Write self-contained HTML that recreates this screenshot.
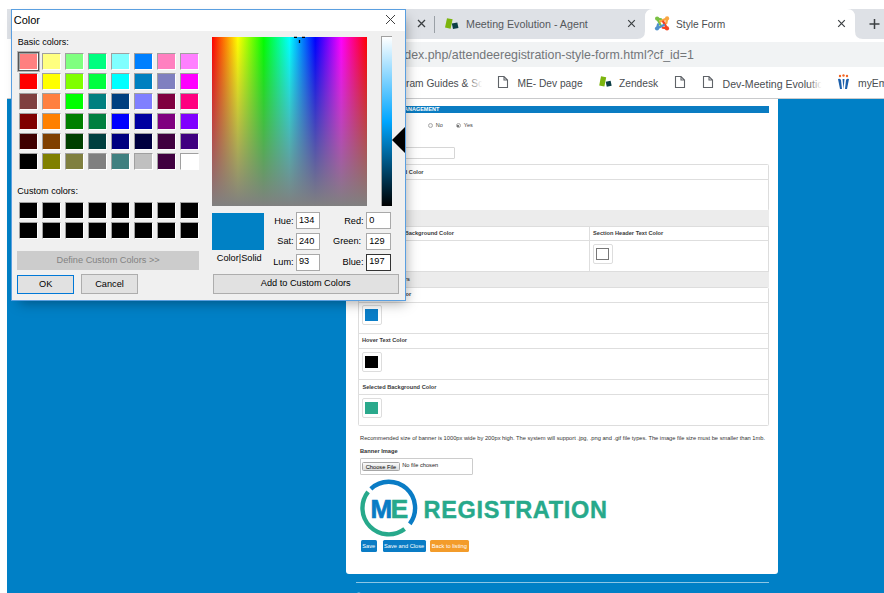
<!DOCTYPE html>
<html><head><meta charset="utf-8">
<style>
*{margin:0;padding:0;box-sizing:border-box}
html,body{width:884px;height:593px;overflow:hidden;background:#fff;font-family:"Liberation Sans",sans-serif}
.a{position:absolute}
.t{position:absolute;white-space:nowrap;line-height:1}
/* browser */
#tabs{left:7px;top:9px;width:877px;height:30px;background:#dee1e6}
#toolbar{left:7px;top:39px;width:877px;height:60px;background:#fff}
#addr{left:60px;top:42px;width:840px;height:25px;background:#f1f3f4;border-radius:13px}
#bmline{left:7px;top:98px;width:877px;height:1px;background:#c9cacc}
#page{left:7px;top:99px;width:877px;height:494px;background:#0080c6}
#panel{left:346px;top:99px;width:432px;height:475px;background:#fff;border-radius:0 0 3px 3px}
.ln{position:absolute;background:#dedede}
.band{position:absolute;background:#ececec}
.hd{position:absolute;font-size:5.65px;font-weight:700;color:#3a3a3a;white-space:nowrap;line-height:1}
.sw{position:absolute;width:20px;height:20px;border:1px solid #ddd;border-radius:2px;background:#fff}
.sw i{position:absolute;left:2px;top:3px;width:13px;height:11.5px;display:block}
.btn{position:absolute;height:11.3px;border-radius:1.5px;color:#fff;font-size:5.7px;line-height:13px;text-align:center;white-space:nowrap}
/* dialog */
#dlg{left:11px;top:9px;width:395px;height:292px;background:#f0f0f0;border:1px solid #5a9fe0;box-shadow:4px 6px 12px -4px rgba(0,0,0,.35)}
#title{left:0;top:0;width:393px;height:21px;background:#fff}
.lbl{position:absolute;font-size:9.2px;color:#000;white-space:nowrap;line-height:1}
.c{position:absolute;width:19px;height:17px;border-top:1px solid #a0a0a0;border-left:1px solid #a0a0a0;border-right:1px solid #fff;border-bottom:1px solid #fff}
.inp{position:absolute;width:24.4px;height:17.2px;background:#fff;border:1px solid #a9a9a9;font-size:9.2px;line-height:1;padding:2.5px 0 0 2px;color:#000}
.wbtn{position:absolute;height:19.5px;background:#e1e1e1;border:1px solid #adadad;font-size:9.2px;line-height:17.5px;text-align:center;color:#000}
</style></head><body>
<!-- BROWSER CHROME -->
<div id="tabs" class="a"></div>
<div class="a" style="left:434px;top:15.5px;width:1px;height:17px;background:#9aa0a6"></div>
<!-- close X of tab left of divider -->
<svg class="a" style="left:417px;top:19px" width="9" height="9" viewBox="0 0 9 9"><path d="M1 1L8 8M8 1L1 8" stroke="#3c4043" stroke-width="1.3"/></svg>
<!-- inactive tab favicon -->
<svg class="a" style="left:444px;top:17px" width="16" height="13" viewBox="0 0 16 13"><path d="M3 1.2L8.6 2.3L6.6 11.8L1 10.6Z" fill="#7cb50e"/><rect x="8.4" y="6" width="5.6" height="5.6" fill="#0d3f47" transform="rotate(-12 11 9)"/></svg>
<div class="t" style="left:466px;top:19.1px;font-size:10.7px;color:#55585c">Meeting Evolution - Agent</div>
<svg class="a" style="left:626.8px;top:19.2px" width="9" height="9" viewBox="0 0 9 9"><path d="M1.2 1.2L7.8 7.8M7.8 1.2L1.2 7.8" stroke="#3c4043" stroke-width="1.2"/></svg>
<!-- active tab -->
<svg class="a" style="left:637px;top:9px" width="233" height="30" viewBox="0 0 233 30"><path d="M0 30Q8 30 8 22V8Q8 0 16 0H210Q218 0 218 8V22Q218 30 226 30Z" fill="#fff"/></svg>
<!-- joomla icon -->
<svg class="a" style="left:654px;top:16px" width="16" height="15" viewBox="0 0 16 15">
<g stroke-width="2.3" stroke-linecap="round" stroke-linejoin="round" fill="none">
<path d="M7.2 3.4L3.2 2.5L6.6 9.2" stroke="#7ac143"/>
<path d="M12.3 7L13.2 2.3L6.4 5.4" stroke="#f9a541"/>
<path d="M8.8 11.6L13 12.3L9.2 5.6" stroke="#f44321"/>
<path d="M4 8.4L3 12.5L9.8 9" stroke="#5091cd"/>
</g>
<circle cx="3.1" cy="2.6" r="2.1" fill="#7ac143"/><circle cx="13.1" cy="2.4" r="2.1" fill="#f9a541"/><circle cx="13" cy="12.4" r="2.1" fill="#f44321"/><circle cx="3" cy="12.5" r="2.1" fill="#5091cd"/>
</svg>
<div class="t" style="left:676px;top:19.6px;font-size:10.2px;color:#4a4d51">Style Form</div>
<svg class="a" style="left:837px;top:19.2px" width="9" height="9" viewBox="0 0 9 9"><path d="M1.2 1.2L7.8 7.8M7.8 1.2L1.2 7.8" stroke="#3c4043" stroke-width="1.2"/></svg>
<svg class="a" style="left:868px;top:18px" width="13" height="12" viewBox="0 0 13 12"><path d="M6.5 1V11M1.5 6H11.5" stroke="#3c4043" stroke-width="1.5"/></svg>
<div id="toolbar" class="a"></div>
<div id="addr" class="a"></div>
<div class="t" style="left:394.6px;top:48.8px;font-size:12.4px;color:#73767a">index.php/attendeeregistration-style-form.html?cf_id=1</div>
<!-- bookmarks -->
<div class="t" style="left:384.5px;top:79.2px;font-size:10.2px;color:#4a4d51">Program Guides &amp; Sc</div>
<div class="a" style="left:467px;top:74px;width:18px;height:16px;background:linear-gradient(90deg,rgba(255,255,255,0),#fff 85%)"></div>
<svg class="a" style="left:497px;top:75px" width="12" height="14" viewBox="0 0 12 14"><path d="M1.5 1.5H7L10.5 5V12.5H1.5Z M7 1.5V5H10.5" fill="none" stroke="#5f6368" stroke-width="1.1"/></svg>
<div class="t" style="left:517.5px;top:79.2px;font-size:10.2px;color:#4a4d51">ME- Dev page</div>
<svg class="a" style="left:598px;top:75px" width="16" height="13" viewBox="0 0 16 13"><path d="M3 1.2L8.2 2.2L6.4 11.4L1.2 10.4Z" fill="#7cb50e"/><rect x="8.2" y="6.2" width="5" height="5" fill="#0d3f47" transform="rotate(-12 10.7 8.7)"/></svg>
<div class="t" style="left:619px;top:79.2px;font-size:10.2px;color:#4a4d51">Zendesk</div>
<svg class="a" style="left:674px;top:75px" width="12" height="14" viewBox="0 0 12 14"><path d="M1.5 1.5H7L10.5 5V12.5H1.5Z M7 1.5V5H10.5" fill="none" stroke="#5f6368" stroke-width="1.1"/></svg>
<svg class="a" style="left:702px;top:75px" width="12" height="14" viewBox="0 0 12 14"><path d="M1.5 1.5H7L10.5 5V12.5H1.5Z M7 1.5V5H10.5" fill="none" stroke="#5f6368" stroke-width="1.1"/></svg>
<div class="t" style="left:722.5px;top:79.2px;font-size:10.6px;color:#4a4d51">Dev-Meeting Evolutic</div>
<div class="a" style="left:808px;top:74px;width:16px;height:16px;background:linear-gradient(90deg,rgba(255,255,255,0),#fff 85%)"></div>
<svg class="a" style="left:836px;top:74px" width="15" height="16" viewBox="0 0 15 16"><circle cx="4" cy="2" r="1.2" fill="#f26522"/><circle cx="7.5" cy="1.5" r="1.2" fill="#f26522"/><circle cx="11" cy="2" r="1.2" fill="#f26522"/><path d="M2 5Q4 4 5 6L6 15H4Z M13 5Q11 4 10 6L9 15H11Z" fill="#1b5fab"/><path d="M6.5 5L7.5 15L8.5 5Z" fill="#1b5fab"/></svg>
<div class="t" style="left:858px;top:79.2px;font-size:10.4px;color:#4a4d51">myEmma</div>
<div id="bmline" class="a"></div>

<!-- PAGE -->
<div id="page" class="a"></div>
<div id="panel" class="a"></div>
<!-- section header bar -->
<div class="a" style="left:358px;top:106px;width:411px;height:7px;background:#0a7cc2"></div>
<div class="t" style="left:378px;top:107px;font-size:5.5px;font-weight:700;color:#fff">COLOR MANAGEMENT</div>
<!-- radios -->
<div class="a" style="left:428px;top:123px;width:5px;height:5px;border:0.7px solid #aaa;border-radius:50%;background:#f4f4f4"></div>
<div class="t" style="left:435.8px;top:122.8px;font-size:5.5px;color:#444">No</div>
<div class="a" style="left:455.8px;top:123px;width:5px;height:5px;border:0.7px solid #aaa;border-radius:50%;background:#f4f4f4"></div>
<div class="a" style="left:457.3px;top:124.5px;width:2px;height:2px;border-radius:50%;background:#555"></div>
<div class="t" style="left:463.8px;top:122.8px;font-size:5.5px;color:#444">Yes</div>
<!-- input -->
<div class="a" style="left:360px;top:147px;width:95px;height:11.5px;border:0.8px solid #d6d6d6;border-radius:1px;background:#fff"></div>

<!-- panel 1 -->
<div class="a" style="left:358px;top:164px;width:410.5px;height:46.5px;border:0.8px solid #ddd;border-radius:1.5px"></div>
<div class="ln" style="left:358px;top:179.3px;width:410.5px;height:0.8px"></div>
<div class="hd" style="left:359.3px;top:169.6px">Page Background Color</div>
<!-- band 1 -->
<div class="band" style="left:358px;top:210.3px;width:410.5px;height:15.7px"></div>
<!-- panel 2 -->
<div class="a" style="left:358px;top:226px;width:410.5px;height:45.8px;border:0.8px solid #ddd"></div>
<div class="ln" style="left:358px;top:240.2px;width:410.5px;height:0.8px"></div>
<div class="ln" style="left:589px;top:226px;width:0.8px;height:45.8px"></div>
<div class="hd" style="left:362px;top:230.6px">Section Header Background Color</div>
<div class="hd" style="left:593px;top:230.6px">Section Header Text Color</div>
<div class="sw" style="left:362px;top:244px"><i style="background:#0080c6"></i></div>
<div class="sw" style="left:593px;top:244px"><i style="background:#fff;border:0.8px solid #777"></i></div>
<!-- band 2 -->
<div class="band" style="left:358px;top:271.6px;width:410.5px;height:15.5px"></div>
<div class="hd" style="left:372.4px;top:276.9px">Button Colors</div>
<!-- panel 3 -->
<div class="a" style="left:358px;top:287px;width:410.5px;height:138.5px;border:0.8px solid #ddd;border-radius:1.5px"></div>
<div class="hd" style="left:362px;top:291.9px">Background Color</div>
<div class="ln" style="left:358px;top:302.3px;width:410.5px;height:0.8px"></div>
<div class="sw" style="left:362px;top:305.3px"><i style="background:#0a7ec8"></i></div>
<div class="ln" style="left:358px;top:333px;width:410.5px;height:0.8px"></div>
<div class="hd" style="left:362px;top:338.1px">Hover Text Color</div>
<div class="ln" style="left:358px;top:348px;width:410.5px;height:0.8px"></div>
<div class="sw" style="left:362px;top:352px"><i style="background:#000"></i></div>
<div class="ln" style="left:358px;top:379.2px;width:410.5px;height:0.8px"></div>
<div class="hd" style="left:362.4px;top:384.5px">Selected Background Color</div>
<div class="ln" style="left:358px;top:394.3px;width:410.5px;height:0.8px"></div>
<div class="sw" style="left:362px;top:398.2px"><i style="background:#2aa98c"></i></div>

<div class="t" style="left:360px;top:435.5px;font-size:5.73px;color:#333">Recommended size of banner is 1000px wide by 200px high. The system will support .jpg, .png and .gif file types. The image file size must be smaller than 1mb.</div>
<div class="t" style="left:360px;top:449.2px;font-size:5.7px;font-weight:700;color:#333">Banner Image</div>
<div class="a" style="left:360.3px;top:458.4px;width:112.5px;height:17px;border:0.8px solid #ccc;border-radius:1px"></div>
<div class="a" style="left:362.2px;top:462.4px;width:37.5px;height:9px;border:0.7px solid #a6a6a6;border-radius:1.5px;background:linear-gradient(#fafafa,#dcdcdc);font-size:5.7px;line-height:8px;text-align:center;color:#000;white-space:nowrap">Choose File</div>
<div class="t" style="left:402.2px;top:462.8px;font-size:5.7px;color:#222">No file chosen</div>

<!-- logo -->
<svg class="a" style="left:355px;top:474px" width="70" height="68" viewBox="0 0 70 68">
<path d="M15.86 14.77 A26.3 26.3 0 0 1 54.8 49.83" fill="none" stroke="#0a7cc5" stroke-width="4.4"/>
<path d="M49.63 55.01 A26.3 26.3 0 0 1 13.07 17.8" fill="none" stroke="#27a98b" stroke-width="4.4"/>
</svg>
<div class="t" style="left:370.5px;top:496px;font-size:26px;font-weight:700;color:#0a7cc5;letter-spacing:-1px;-webkit-text-stroke:0.7px #0a7cc5">M</div>
<div class="t" style="left:390.8px;top:496px;font-size:26px;font-weight:700;color:#27a98b;-webkit-text-stroke:0.7px #27a98b">E</div>
<div class="t" style="left:423.5px;top:498.5px;font-size:23.5px;font-weight:700;color:#27a98b;letter-spacing:0.7px;-webkit-text-stroke:0.4px #27a98b">REGISTRATION</div>

<div class="btn" style="left:360.7px;top:540.4px;width:16px;background:#0a7cc5">Save</div>
<div class="btn" style="left:382.5px;top:540.4px;width:43.3px;background:#0a7cc5">Save and Close</div>
<div class="btn" style="left:429.9px;top:540.4px;width:38.8px;background:#f39c2b">Back to listing</div>

<div class="a" style="left:356px;top:582px;width:413px;height:1px;background:rgba(255,255,255,.55)"></div>

<div class="t" style="left:356px;top:591.6px;font-size:7px;font-weight:700;color:rgba(255,255,255,.6)">&copy; 2020 Meeting Evolution, Inc.</div>
<!-- DIALOG -->
<div id="dlg" class="a">
 <div id="title" class="a"></div>
 <div class="t" style="left:1.7px;top:5px;font-size:11px;color:#000">Color</div>
 <svg class="a" style="left:374px;top:5.1px" width="9" height="9" viewBox="0 0 9 9"><path d="M0 0L9 9M9 0L0 9" stroke="#404040" stroke-width="1"/></svg>
 <div class="lbl" style="left:5.7px;top:28.1px;font-size:9px">Basic colors:</div>
 <div id="basic">
<div class="c" style="left:7px;top:43px;background:#FF8080"></div>
<div class="c" style="left:30px;top:43px;background:#FFFF80"></div>
<div class="c" style="left:53px;top:43px;background:#80FF80"></div>
<div class="c" style="left:76px;top:43px;background:#00FF80"></div>
<div class="c" style="left:99px;top:43px;background:#80FFFF"></div>
<div class="c" style="left:122px;top:43px;background:#0080FF"></div>
<div class="c" style="left:145px;top:43px;background:#FF80C0"></div>
<div class="c" style="left:168px;top:43px;background:#FF80FF"></div>
<div class="c" style="left:7px;top:63px;background:#FF0000"></div>
<div class="c" style="left:30px;top:63px;background:#FFFF00"></div>
<div class="c" style="left:53px;top:63px;background:#80FF00"></div>
<div class="c" style="left:76px;top:63px;background:#00FF40"></div>
<div class="c" style="left:99px;top:63px;background:#00FFFF"></div>
<div class="c" style="left:122px;top:63px;background:#0080C0"></div>
<div class="c" style="left:145px;top:63px;background:#8080C0"></div>
<div class="c" style="left:168px;top:63px;background:#FF00FF"></div>
<div class="c" style="left:7px;top:83px;background:#804040"></div>
<div class="c" style="left:30px;top:83px;background:#FF8040"></div>
<div class="c" style="left:53px;top:83px;background:#00FF00"></div>
<div class="c" style="left:76px;top:83px;background:#008080"></div>
<div class="c" style="left:99px;top:83px;background:#004080"></div>
<div class="c" style="left:122px;top:83px;background:#8080FF"></div>
<div class="c" style="left:145px;top:83px;background:#800040"></div>
<div class="c" style="left:168px;top:83px;background:#FF0080"></div>
<div class="c" style="left:7px;top:103px;background:#800000"></div>
<div class="c" style="left:30px;top:103px;background:#FF8000"></div>
<div class="c" style="left:53px;top:103px;background:#008000"></div>
<div class="c" style="left:76px;top:103px;background:#008040"></div>
<div class="c" style="left:99px;top:103px;background:#0000FF"></div>
<div class="c" style="left:122px;top:103px;background:#0000A0"></div>
<div class="c" style="left:145px;top:103px;background:#800080"></div>
<div class="c" style="left:168px;top:103px;background:#8000FF"></div>
<div class="c" style="left:7px;top:123px;background:#400000"></div>
<div class="c" style="left:30px;top:123px;background:#804000"></div>
<div class="c" style="left:53px;top:123px;background:#004000"></div>
<div class="c" style="left:76px;top:123px;background:#004040"></div>
<div class="c" style="left:99px;top:123px;background:#000080"></div>
<div class="c" style="left:122px;top:123px;background:#000040"></div>
<div class="c" style="left:145px;top:123px;background:#400040"></div>
<div class="c" style="left:168px;top:123px;background:#400080"></div>
<div class="c" style="left:7px;top:143px;background:#000000"></div>
<div class="c" style="left:30px;top:143px;background:#808000"></div>
<div class="c" style="left:53px;top:143px;background:#808040"></div>
<div class="c" style="left:76px;top:143px;background:#808080"></div>
<div class="c" style="left:99px;top:143px;background:#408080"></div>
<div class="c" style="left:122px;top:143px;background:#C0C0C0"></div>
<div class="c" style="left:145px;top:143px;background:#400040"></div>
<div class="c" style="left:168px;top:143px;background:#FFFFFF"></div>
<div class="a" style="left:5px;top:41px;width:23px;height:21px;border:1px solid #b4b4b4"></div><div class="a" style="left:6px;top:42px;width:21px;height:19px;border:1.5px solid #555"></div>
</div>
 <div class="lbl" style="left:5.3px;top:177.3px;font-size:9.1px">Custom colors:</div>
 <div id="custom">
<div class="c" style="left:7px;top:192px;background:#000"></div>
<div class="c" style="left:30px;top:192px;background:#000"></div>
<div class="c" style="left:53px;top:192px;background:#000"></div>
<div class="c" style="left:76px;top:192px;background:#000"></div>
<div class="c" style="left:99px;top:192px;background:#000"></div>
<div class="c" style="left:122px;top:192px;background:#000"></div>
<div class="c" style="left:145px;top:192px;background:#000"></div>
<div class="c" style="left:168px;top:192px;background:#000"></div>
<div class="c" style="left:7px;top:212px;background:#000"></div>
<div class="c" style="left:30px;top:212px;background:#000"></div>
<div class="c" style="left:53px;top:212px;background:#000"></div>
<div class="c" style="left:76px;top:212px;background:#000"></div>
<div class="c" style="left:99px;top:212px;background:#000"></div>
<div class="c" style="left:122px;top:212px;background:#000"></div>
<div class="c" style="left:145px;top:212px;background:#000"></div>
<div class="c" style="left:168px;top:212px;background:#000"></div>
</div>
 <div class="wbtn" style="left:5.3px;top:241.3px;width:181.6px;height:18.6px;background:#cccccc;border-color:#cccccc;color:#838383;line-height:17.4px">Define Custom Colors &gt;&gt;</div>
 <div class="wbtn" style="left:5.4px;top:264.6px;width:56.6px;height:19px;border:1.5px solid #0078d7;line-height:16px">OK</div>
 <div class="wbtn" style="left:69px;top:264.4px;width:57px;height:19.2px;line-height:18.4px">Cancel</div>
 <!-- spectrum -->
 <div class="a" style="left:200px;top:27px;width:155px;height:169px;background:linear-gradient(rgba(128,128,128,0),#808080),linear-gradient(90deg,#f00,#ff0 16.67%,#0f0 33.33%,#0ff 50%,#00f 66.67%,#f0f 83.33%,#f00)"></div>
 <svg class="a" style="left:281px;top:26px" width="14" height="8" viewBox="0 0 14 8"><path d="M1 1.3H4M9 1.3H12M6.5 4V7" stroke="#000" stroke-width="1.3"/></svg>
 <!-- lum bar -->
 <div class="a" style="left:368.8px;top:26px;width:11px;height:170px;border-top:1px solid #a0a0a0;border-left:1px solid #a0a0a0;background:linear-gradient(#fff,#00a6ff 50%,#000)"></div>
 <svg class="a" style="left:380px;top:117px" width="13" height="26" viewBox="0 0 13 26"><path d="M0 13L13 0V26Z" fill="#000"/></svg>
 <!-- preview -->
 <div class="a" style="left:200px;top:202.7px;width:52px;height:37px;background:#0081c5"></div>
 <div class="lbl" style="left:204.8px;top:243.8px">Color|Solid</div>
 <div class="lbl" style="left:262.2px;top:207.2px">Hue:</div>
 <div class="lbl" style="left:265.3px;top:227.4px">Sat:</div>
 <div class="lbl" style="left:261.2px;top:247.7px">Lum:</div>
 <div class="inp" style="left:284px;top:202.3px">134</div>
 <div class="inp" style="left:284px;top:223.2px">240</div>
 <div class="inp" style="left:284px;top:243.6px">93</div>
 <div class="lbl" style="left:332.2px;top:207.2px">Red:</div>
 <div class="lbl" style="left:321px;top:227.4px">Green:</div>
 <div class="lbl" style="left:330.6px;top:247.7px">Blue:</div>
 <div class="inp" style="left:354.2px;top:202.3px">0</div>
 <div class="inp" style="left:354.2px;top:223.2px">129</div>
 <div class="inp" style="left:354.2px;top:243.6px;border-color:#333">197</div>
 <div class="wbtn" style="left:200.6px;top:264.2px;width:186.3px;height:19.4px;line-height:17.4px">Add to Custom Colors</div>
</div>

</body></html>
